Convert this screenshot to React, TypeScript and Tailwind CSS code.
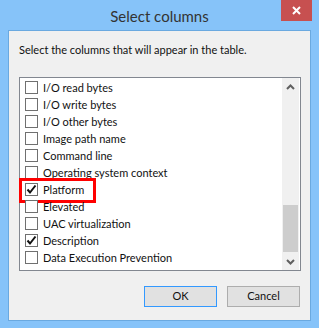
const columns = [
  { name: "I/O read bytes", checked: false },
  { name: "I/O write bytes", checked: false },
  { name: "I/O other bytes", checked: false },
  { name: "Image path name", checked: false },
  { name: "Command line", checked: false },
  { name: "Operating system context", checked: false },
  { name: "Platform", checked: true, highlight: true },
  { name: "Elevated", checked: false },
  { name: "UAC virtualization", checked: false },
  { name: "Description", checked: true },
  { name: "Data Execution Prevention", checked: false },
];

function CheckBox({ checked }: { checked: boolean }) {
  return (
    <span className="w-[13px] h-[13px] border border-[#707070] bg-white flex items-center justify-center shrink-0">
      {checked && (
        <svg width="11" height="11" viewBox="0 0 11 11">
          <path d="M1.5 5.5 L4 8.5 L9.5 1.5" fill="none" stroke="#111" strokeWidth="2" />
        </svg>
      )}
    </span>
  );
}

export default function App() {
  return (
    <div
      className="w-[319px] h-[328px] bg-[#86c3f9] flex flex-col text-[11px] text-[#111]"
      style={{ fontFamily: "'Segoe UI', Lato, 'Noto Sans', sans-serif" }}
    >
      {/* title bar */}
      <div className="h-[30px] shrink-0 flex items-start relative">
        <div className="flex-1 text-center text-[15px] text-[#333] pt-[5px]">Select columns</div>
        <button className="absolute right-[7px] top-0 w-[31px] h-[21px] bg-[#c75050] flex items-center justify-center">
          <svg width="9" height="9" viewBox="0 0 9 9">
            <path d="M1 1 L8 8 M8 1 L1 8" stroke="#fff" strokeWidth="2" />
          </svg>
        </button>
      </div>

      {/* body */}
      <div className="mx-[8px] mb-[7px] flex-1 bg-[#f0f0f0] border border-[#6aa9e0] flex flex-col pl-[10px] pr-[9px]">
        <p className="mt-[10px] h-[17px] leading-[17px]">Select the columns that will appear in the table.</p>

        <div className="mt-[19px] h-[194px] border border-[#828790] bg-white flex">
          <div className="flex-1 pt-[1px] pl-[5px] flex flex-col">
            {columns.map((col) => (
              <div key={col.name} className="h-[17px] flex items-center gap-[5px] relative whitespace-nowrap">
                <CheckBox checked={col.checked} />
                <span className="leading-[17px]">{col.name}</span>
                {col.highlight && (
                  <span className="absolute left-[-6px] top-[-3px] w-[77px] h-[25px] border-[3px] border-[#ff0000]" />
                )}
              </div>
            ))}
          </div>

          {/* scrollbar */}
          <div className="w-[17px] mr-[1px] bg-[#f0f0f0] flex flex-col items-center">
            <div className="h-[17px] flex items-center justify-center">
              <svg width="9" height="6" viewBox="0 0 9 6">
                <path d="M1 5 L4.5 1.5 L8 5" fill="none" stroke="#606060" strokeWidth="2" />
              </svg>
            </div>
            <div className="flex-1 w-full flex flex-col justify-end pb-[1px]">
              <div className="h-[47px] mx-[1px] bg-[#cdcdcd]" />
            </div>
            <div className="h-[17px] flex items-center justify-center">
              <svg width="9" height="6" viewBox="0 0 9 6">
                <path d="M1 1 L4.5 4.5 L8 1" fill="none" stroke="#606060" strokeWidth="2" />
              </svg>
            </div>
          </div>
        </div>

        <div className="mt-[15px] flex justify-end gap-[10px] pr-[1px]">
          <button className="w-[73px] h-[21px] border border-[#3399ff] bg-[#e1e1e1]">OK</button>
          <button className="w-[73px] h-[21px] border border-[#adadad] bg-[#e1e1e1]">Cancel</button>
        </div>
      </div>
    </div>
  );
}
